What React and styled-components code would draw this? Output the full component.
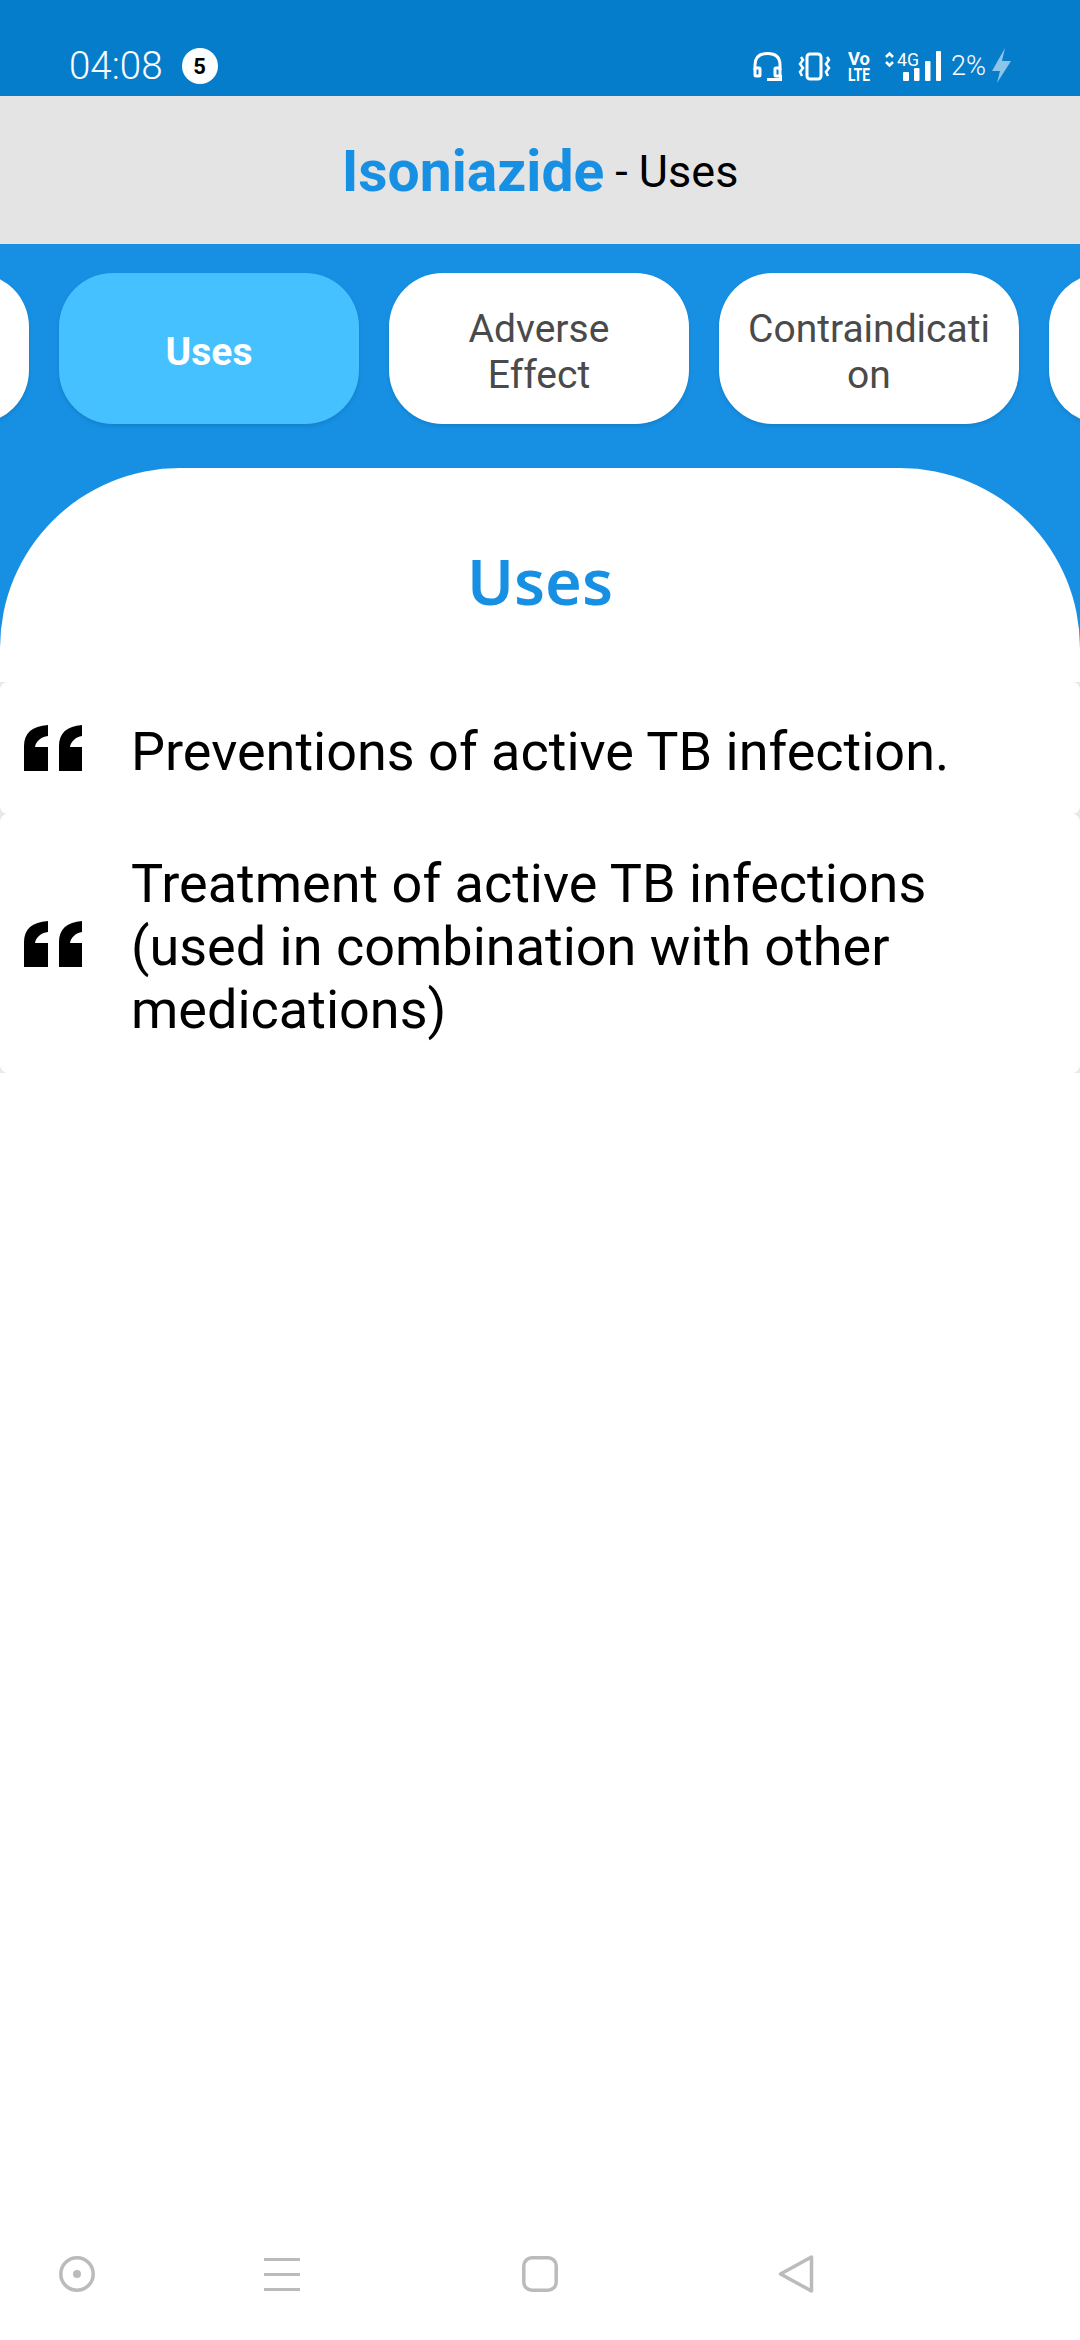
import React from "react";
import styled, { createGlobalStyle } from "styled-components";

const GlobalStyle = createGlobalStyle`
  html, body {
    margin: 0;
    padding: 0;
    background: #fff;
  }
  body {
    font-family: Roboto, "Liberation Sans", sans-serif;
  }
`;

const Screen = styled.div`
  width: 1080px;
  height: 2340px;
  display: flex;
  flex-direction: column;
  overflow: hidden;
  background: #fff;
`;

const StatusBar = styled.div`
  height: 96px;
  flex: none;
  background: #067dcb;
  color: #fff;
  display: flex;
  justify-content: space-between;
  align-items: flex-end;
  padding: 0 66px 10px 69px;
  box-sizing: border-box;
`;

const StatusLeft = styled.div`
  display: flex;
  align-items: center;
  gap: 19px;
`;

const Clock = styled.span`
  font-size: 38.5px;
  font-weight: 300;
  line-height: 40px;
`;

const Badge = styled.span`
  width: 36px;
  height: 36px;
  border-radius: 50%;
  background: #fff;
  color: #000;
  font-size: 22px;
  font-weight: 700;
  display: flex;
  align-items: center;
  justify-content: center;
`;

const StatusIcons = styled.svg`
  display: block;
`;

const Header = styled.div`
  height: 148px;
  flex: none;
  box-sizing: border-box;
  padding-top: 3px;
  background: #e4e4e4;
  display: flex;
  align-items: center;
  justify-content: center;
  gap: 11px;
`;

const DrugName = styled.span`
  color: #1790e4;
  font-size: 57px;
  font-weight: 700;
`;

const HeaderSuffix = styled.span`
  color: #000;
  font-size: 45px;
`;

const Hero = styled.div`
  flex: none;
  background: #1790e4;
`;

const TabRow = styled.div`
  display: flex;
  gap: 30px;
  padding: 29px 0 44px;
  margin-left: -271px;
  width: 1700px;
`;

const Tab = styled.div`
  width: 300px;
  height: 151px;
  flex: none;
  box-sizing: border-box;
  padding: 6px 28px 0;
  border-radius: 54px;
  background: ${(p) => (p.$active ? "#45c1ff" : "#fff")};
  color: ${(p) => (p.$active ? "#fff" : "#4a4a4a")};
  font-size: 39px;
  font-weight: ${(p) => (p.$active ? 700 : 400)};
  line-height: 46px;
  text-align: center;
  overflow-wrap: anywhere;
  display: flex;
  align-items: center;
  justify-content: center;
  box-shadow: 0 2px 4px rgba(0, 0, 0, 0.12);
`;

const Panel = styled.div`
  flex: 1;
  background: #1790e4;
  display: flex;
`;

const PanelInner = styled.div`
  flex: 1;
  background: #fff;
  border-radius: 180px 180px 0 0;
  padding-top: 75px;
  display: flex;
  flex-direction: column;
`;

const PanelTitle = styled.h1`
  margin: 0 0 63px;
  color: #1790e4;
  font-family: "Noto Sans", sans-serif;
  font-size: 63px;
  font-weight: 600;
  line-height: 76px;
  text-align: center;
`;

/* rows are white on a pale list, so only their rounded corners show */
const RowList = styled.div`
  background: #e8e8e8;
`;

const Row = styled.div`
  display: flex;
  align-items: center;
  box-sizing: border-box;
  height: ${(p) => p.$height}px;
  padding: 0 40px 0 24px;
  gap: 49px;
  background: #fff;
  border-radius: 8px;
`;

const QuoteIcon = styled.svg`
  flex: none;
  display: block;
`;

const RowText = styled.div`
  color: #000;
  font-size: 54px;
  line-height: 63px;
  padding-top: 6px;
`;

const NavBar = styled.div`
  height: 132px;
  flex: none;
  background: #fff;
  display: grid;
  grid-template-columns: 154px 256px 260px 252px 1fr;
  align-items: center;
`;

const NavCell = styled.div`
  display: flex;
  justify-content: center;
`;

const Quote = () => (
  <QuoteIcon width="58" height="46" viewBox="0 0 58 46">
    <path d="M0 46V21C0 8 8 1 24 0V11C17 12 12 16 11 22H24V46Z" fill="#000" />
    <path d="M35 46V21C35 8 43 1 58 0V11C52 12 47 16 46 22H58V46Z" fill="#000" />
  </QuoteIcon>
);

const tabs = [
  { id: "prev", label: "" },
  { id: "uses", label: "Uses", active: true },
  { id: "adverse", label: "Adverse Effect" },
  { id: "contra", label: "Contraindication" },
  { id: "next", label: "" },
];

export default function App() {
  return (
    <Screen>
      <GlobalStyle />
      <StatusBar>
        <StatusLeft>
          <Clock>04:08</Clock>
          <Badge>5</Badge>
        </StatusLeft>
        <StatusIcons width="264" height="40" viewBox="750 46 264 40">
          {/* headset */}
          <g fill="none" stroke="#fff" strokeWidth="3">
            <path d="M755 70V65C755 57 760 53.500 767.500 53.500C775 53.500 780 57 780 65V70" />
            <rect x="755" y="68" width="5" height="8" rx="1" />
            <rect x="775" y="68" width="5" height="8" rx="1" />
            <path d="M767 79.500H780.500V75" />
          </g>
          {/* vibrate */}
          <rect x="807" y="54" width="14" height="25" rx="3" fill="none" stroke="#fff" strokeWidth="3" />
          <path d="M801 57L803 60L800 64L803 68L800 72L802 76" fill="none" stroke="#fff" strokeWidth="2.500" />
          <path d="M827 57L829 60L826 64L829 68L826 72L828 76" fill="none" stroke="#fff" strokeWidth="2.500" />
          {/* volte */}
          <text fontWeight="700" fill="#fff" fontFamily="Roboto">
            <tspan x="848" y="65" fontSize="18" textLength="22" lengthAdjust="spacingAndGlyphs">Vo</tspan>
            <tspan x="848" y="81" fontSize="19" textLength="22" lengthAdjust="spacingAndGlyphs">LTE</tspan>
          </text>
          {/* signal */}
          <path d="M886 57L889.500 53.500L893 57M886 62L889.500 65.500L893 62" fill="none" stroke="#fff" strokeWidth="2.500" />
          <text x="897" y="66" fontSize="18" fill="#fff" fontFamily="Roboto" textLength="22" lengthAdjust="spacingAndGlyphs">4G</text>
          <rect x="903" y="72" width="6" height="9" rx="1" fill="#fff" />
          <rect x="914" y="68" width="5.500" height="13" rx="1" fill="#fff" />
          <rect x="925" y="61" width="5.500" height="20" rx="1" fill="#fff" />
          <rect x="936" y="51" width="5" height="30" rx="1" fill="#fff" />
          <text x="951" y="75" fontSize="27" fontWeight="300" fill="#fff" fontFamily="Roboto">2%</text>
          <path d="M1005 48L992 71H1000L997 83L1011 61H1002Z" fill="#8cc4ea" />
        </StatusIcons>
      </StatusBar>
      <Header>
        <DrugName>Isoniazide</DrugName>
        <HeaderSuffix>- Uses</HeaderSuffix>
      </Header>
      <Hero>
        <TabRow>
          {tabs.map((t) => (
            <Tab key={t.id} $active={t.active}>{t.label}</Tab>
          ))}
        </TabRow>
      </Hero>
      <Panel>
        <PanelInner>
          <PanelTitle>Uses</PanelTitle>
          <RowList>
            <Row $height={132}>
              <Quote />
              <RowText>Preventions of active TB infection.</RowText>
            </Row>
            <Row $height={259}>
              <Quote />
              <RowText>
                Treatment of active TB infections (used in combination with other medications)
              </RowText>
            </Row>
          </RowList>
        </PanelInner>
      </Panel>
      <NavBar>
        <NavCell>
          <svg width="36" height="36" viewBox="0 0 36 36">
            <circle cx="18" cy="18" r="16.200" fill="none" stroke="#bbb" strokeWidth="3.500" />
            <circle cx="18" cy="18" r="4" fill="#bbb" />
          </svg>
        </NavCell>
        <NavCell>
          <svg width="36" height="33" viewBox="0 0 36 33">
            <path d="M0 1.500H36M0 16.500H36M0 31.500H36" stroke="#bbb" strokeWidth="3" />
          </svg>
        </NavCell>
        <NavCell>
          <svg width="36" height="36" viewBox="0 0 36 36">
            <rect x="1.800" y="1.800" width="32.400" height="32.400" rx="8" fill="none" stroke="#bbb" strokeWidth="3.500" />
          </svg>
        </NavCell>
        <NavCell>
          <svg width="36" height="40" viewBox="0 0 36 40">
            <path d="M33.500 3V37L2.500 20Z" fill="none" stroke="#bbb" strokeWidth="3.500" strokeLinejoin="round" />
          </svg>
        </NavCell>
      </NavBar>
    </Screen>
  );
}
